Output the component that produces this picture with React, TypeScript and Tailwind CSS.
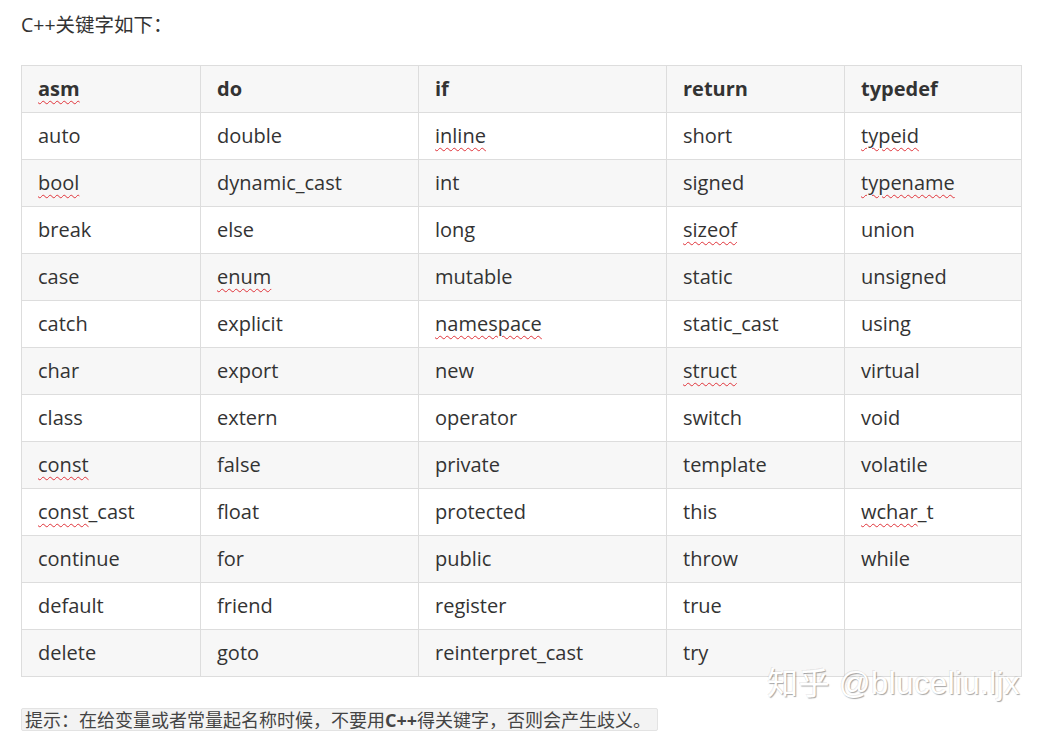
const rows: string[][] = [
  ['auto', 'double', '~inline', 'short', '~typeid'],
  ['~bool', 'dynamic_cast', 'int', 'signed', '~typename'],
  ['break', 'else', 'long', '~sizeof', 'union'],
  ['case', '~enum', 'mutable', 'static', 'unsigned'],
  ['catch', 'explicit', '~namespace', 'static_cast', 'using'],
  ['char', 'export', 'new', '~struct', 'virtual'],
  ['class', 'extern', 'operator', 'switch', 'void'],
  ['~const', 'false', 'private', 'template', 'volatile'],
  ['~const|_cast', 'float', 'protected', 'this', '~wchar|_t'],
  ['continue', 'for', 'public', 'throw', 'while'],
  ['default', 'friend', 'register', 'true', ''],
  ['delete', 'goto', 'reinterpret_cast', 'try', ''],
]

const head = ['~asm', 'do', 'if', 'return', 'typedef']

// "~word" gets the spell-check squiggle; "|" splits off an unmarked tail
function Word({ w }: { w: string }) {
  if (!w.startsWith('~')) return <>{w}</>
  const [marked, rest] = w.slice(1).split('|')
  return (
    <>
      <span className="underline decoration-wavy decoration-[#e0333a] decoration-1 underline-offset-[4px]">{marked}</span>
      {rest}
    </>
  )
}

const cell = 'border border-[#dddddd] px-4 py-[10px] text-left align-middle leading-[26px]'

export default function App() {
  return (
    <div
      className="relative h-[733px] w-[1052px] bg-white text-[#333333]"
      style={{ fontFamily: '"Open Sans", "Noto Sans CJK SC", sans-serif' }}
    >
      <p className="px-[21px] pt-[11px] text-[19.5px] leading-[28px]">C++关键字如下：</p>

      <div className="px-[21px] pt-[26px]">
        <table className="w-[1000px] table-fixed border-collapse text-[20px]">
          <colgroup>
            <col className="w-[179px]" />
            <col className="w-[218px]" />
            <col className="w-[248px]" />
            <col className="w-[178px]" />
            <col className="w-[177px]" />
          </colgroup>
          <thead>
            <tr className="bg-[#f7f7f7]">
              {head.map((h) => (
                <th key={h} className={cell + ' font-bold'}>
                  <Word w={h} />
                </th>
              ))}
            </tr>
          </thead>
          <tbody>
            {rows.map((r, i) => (
              <tr key={i} className={i % 2 === 1 ? 'bg-[#f7f7f7]' : 'bg-white'}>
                {r.map((w, j) => (
                  <td key={j} className={cell}>
                    <Word w={w} />
                  </td>
                ))}
              </tr>
            ))}
          </tbody>
        </table>
      </div>

      <div className="px-[21px] pt-[31px]">
        <span
          className="inline-block rounded-[2px] border border-[#e3e3e3] bg-[#f3f3f3] pl-[3px] pr-[6px] text-[18px] leading-[20px] text-[#444444]"
          style={{ fontFamily: '"Noto Sans CJK SC", sans-serif' }}
        >
          提示：在给变量或者常量起名称时候，不要用
          <b className="font-bold" style={{ fontFamily: '"Open Sans", sans-serif' }}>C++</b>
          得关键字，否则会产生歧义。
        </span>
      </div>

      <div
        className="absolute left-[767px] top-[664px] text-[31px] leading-[40px] tracking-[0.5px] text-white [text-shadow:1px_1px_1px_rgba(0,0,0,0.35),-1px_-1px_0_rgba(0,0,0,0.08)]"
        style={{ fontFamily: '"Liberation Sans", "Noto Sans CJK SC", sans-serif' }}
      >
        知乎 @bluceliu.ljx
      </div>
    </div>
  )
}
